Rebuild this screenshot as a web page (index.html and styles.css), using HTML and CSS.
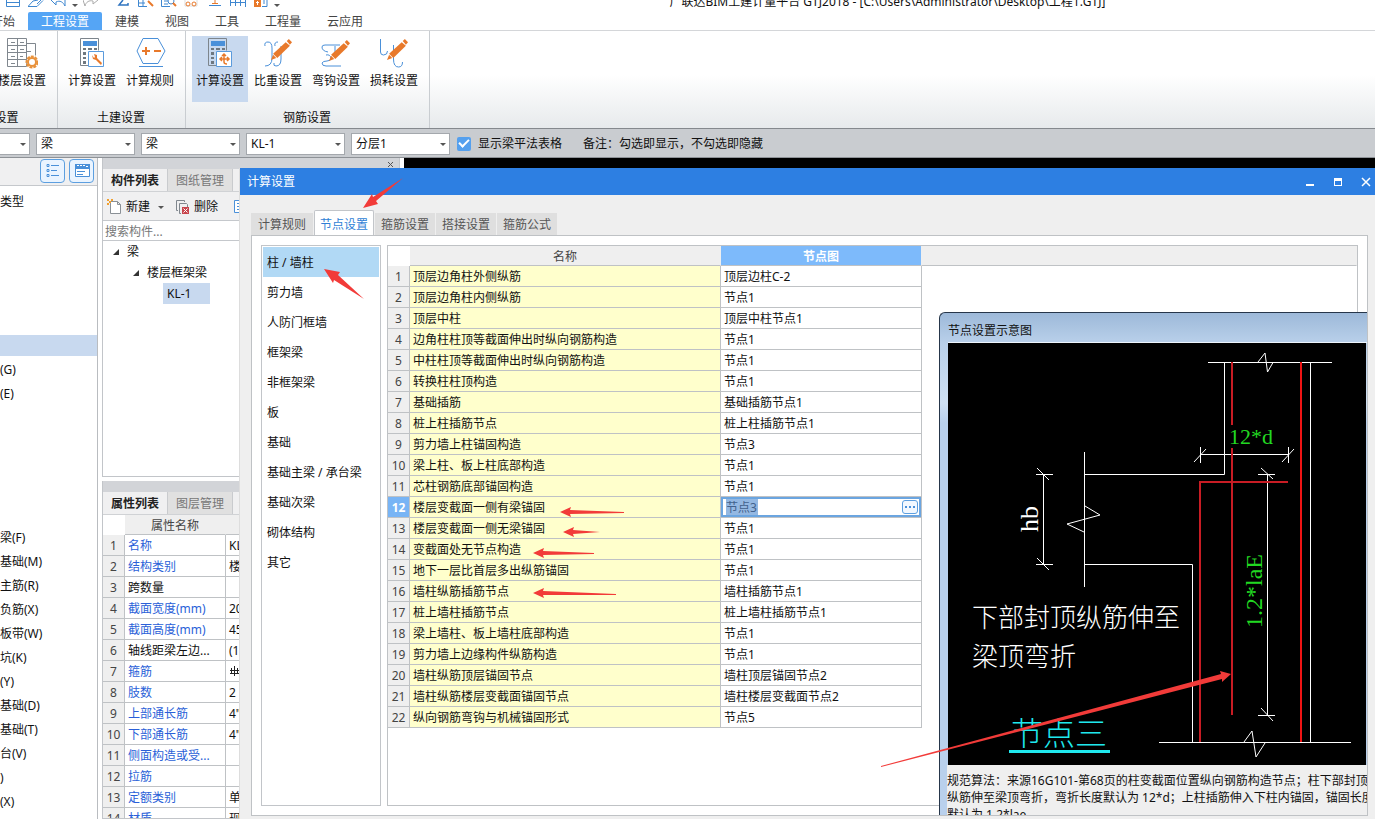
FILE: index.html
```html
<!DOCTYPE html>
<html lang="zh-CN">
<head>
<meta charset="utf-8">
<title>广联达BIM土建计量平台 GTJ2018</title>
<link rel="stylesheet" href="styles.css">
</head>
<body>
<svg class="defs" aria-hidden="true">
  <symbol id="calc" viewBox="0 0 32 32">
    <path d="M4.5 1.5h18v12M12 28.500H4.500V1.500" fill="none" stroke="#7d858c"/>
    <path d="M7 4h14v5H7z" fill="#4a90d9"/>
    <path d="M7 11h3v2H7zm5 0h4v2h-4zm6 0h3v2h-3zM7 15h3v3H7zm0 5h3v2H7zm0 4h3v3H7zm5-9h1v3h-1z" fill="#6f7880"/>
    <path d="M12.500 14.500h15v15h-15z" fill="#fff" stroke="#5b9bdc"/>
  </symbol>
  <symbol id="pencil" viewBox="0 0 20 20">
    <path d="M0 20l2-5 3 3z" fill="#e8792b"/>
    <path d="M2 14L14 3l4 3.500L6 18z" fill="#e8792b"/>
    <path d="M15 2l2-2 3 3-2 2.500z" fill="#e8792b"/>
  </symbol>
</svg>

<header class="titlebar">
  <div class="quick">
    <button aria-label="保存"><svg viewBox="0 0 16 7"><path d="M1.500 0v6.500h13V0M2 2.500h12" fill="none" stroke="#3f87d0"/></svg></button>
    <button aria-label="打开"><svg viewBox="0 0 16 7"><path d="M0 6.500h9l6-6M0 6.500L5 1l5-1M9 4l4-4" fill="none" stroke="#3f87d0"/></svg></button>
    <button class="menu" aria-label="撤销"><svg viewBox="0 0 16 7"><path d="M0 0l5 5V2c4-2 7 0 9 4V0" fill="none" stroke="#3f87d0"/></svg><i class="caret"></i></button>
    <button class="menu dim" aria-label="恢复"><svg viewBox="0 0 16 7"><path d="M15 0l-5 4V1C6 0 3 2 2 6L0 0" fill="none" stroke="#aaa"/></svg><i class="caret"></i></button>
    <button aria-label="汇总"><svg viewBox="0 0 16 7"><path d="M8 0L4 5h9V3" fill="none" stroke="#2f74c0" stroke-width="1.500"/></svg></button>
    <button aria-label="查看"><svg viewBox="0 0 16 7"><path d="M.5 0v6.500H9M5 0v6M1 3h6" fill="none" stroke="#3f87d0"/><path d="M10 1l5 5" stroke="#e8792b" stroke-width="2"/></svg></button>
    <button aria-label="查找"><svg viewBox="0 0 16 7"><path d="M.5 0v6.500H9M3 1h4M3 4h4" fill="none" stroke="#3f87d0"/><circle cx="10" cy="1" r="3" fill="none" stroke="#3f87d0"/><path d="M12 3l3 3" stroke="#e8792b" stroke-width="2"/></svg></button>
    <button aria-label="检查"><svg viewBox="0 0 16 7"><path d="M1 0v6h12V0" fill="none" stroke="#ddd"/><circle cx="4" cy="4" r="2" fill="none" stroke="#e8792b"/><circle cx="10" cy="4" r="2" fill="none" stroke="#e8792b"/></svg></button>
    <button aria-label="钢筋"><svg viewBox="0 0 16 7"><path d="M8 0v3M5 3.500h6" fill="none" stroke="#e8792b"/><path d="M2 5.500h12" stroke="#3f87d0"/></svg></button>
    <button aria-label="表格"><svg viewBox="0 0 16 7"><path d="M.5 6V0M5.500 6V0M10.500 6V0M15.500 7V0M0 2.500h16" fill="none" stroke="#3f87d0"/></svg></button>
    <button class="menu" aria-label="更多"><svg viewBox="0 0 16 7"><path d="M1 0h7v7H1z" fill="#e8792b"/><path d="M4 1h1v1h1v1H5v2H4V3H3V2h1z" fill="#fff"/><path d="M9 6.500h5V0M11 0v4" fill="none" stroke="#3f87d0"/></svg><i class="caret"></i></button>
  </div>
  <h1 class="app-title">广联达BIM土建计量平台 GTJ2018 - [C:\Users\Administrator\Desktop\工程1.GTJ]</h1>
</header>

<nav class="menubar">
  <button>开始</button><button class="on">工程设置</button><button>建模</button><button>视图</button><button>工具</button><button>工程量</button><button>云应用</button>
</nav>

<section class="ribbon">
  <div class="group cut">
    <div class="tools">
      <button class="tool"><svg viewBox="0 0 32 32"><path d="M1.500 1.500h19v28h-19zM1.500 8.500h19M1.500 15.500h19M1.500 22.500h19M11.500 1.500v28M21 6.500h8.500v12M21 14.500h4" fill="none" stroke="#80878e"/><path d="M5 5.500h4M14 5.500h4M5 12.500h4M14 12.500h4M5 19.500h4M5 26.500h4M14 19.500h3" stroke="#80878e"/><circle cx="26" cy="25" r="5.500" fill="#fff" stroke="#e8913a" stroke-width="2" stroke-dasharray="3 1"/><circle cx="26" cy="25" r="4" fill="#fff" stroke="#e8913a" stroke-width="2"/></svg><span>楼层设置</span></button>
    </div>
    <div class="caption">工程设置</div>
  </div>
  <div class="group">
    <div class="tools">
      <button class="tool"><svg viewBox="0 0 32 32"><use href="#calc"/><path d="M16 18l1 4 3 1 5 5 1-2-5-5v-3l-3-1 1 3-1 1z" fill="#e8792b"/></svg><span>计算设置</span></button>
      <button class="tool"><svg viewBox="0 0 32 32"><path d="M3 14L9 1.500h15L31 14l-7 12.500H9zM5 29.500h24" fill="none" stroke="#4a90d9"/><path d="M8 14h8M12 10v8M20 14h7" stroke="#e8792b" stroke-width="2"/></svg><span>计算规则</span></button>
    </div>
    <div class="caption">土建设置</div>
  </div>
  <div class="group">
    <div class="tools">
      <button class="tool on"><svg viewBox="0 0 32 32"><use href="#calc"/><path d="M16 22h9M20 17v8q0 2 3 2M18 19l2-2 2 2M23 20l2 2-2 2M18 20l-2 2 2 2" fill="none" stroke="#e8792b" stroke-width="1.500"/></svg><span>计算设置</span></button>
      <button class="tool"><svg viewBox="0 0 32 32"><path d="M3 9Q2 5 6 5q4 0 4 6v10q0 8-7 8M13 9q-1-4 3-4M19 9v13q0 7-5 7-3 0-2-3" fill="none" stroke="#4a90d9"/><use href="#pencil" x="9" y="2" width="21" height="21"/></svg><span>比重设置</span></button>
      <button class="tool"><svg viewBox="0 0 32 32"><path d="M8 15q-6-1-6-5 0-2 3-2h15M15 9v7M6 18q4-1 5 3 0 3-4 3-4 0-5 2 0 3 4 3h15" fill="none" stroke="#4a90d9"/><use href="#pencil" x="9" y="3" width="21" height="21"/></svg><span>弯钩设置</span></button>
      <button class="tool"><svg viewBox="0 0 32 32"><path d="M2.500 2v13q0 3 3 3 4 0 4-4M15.500 8v14q0 8 5 8 4 0 4-5" fill="none" stroke="#4a90d9"/><use href="#pencil" x="9" y="2" width="21" height="21"/></svg><span>损耗设置</span></button>
    </div>
    <div class="caption">钢筋设置</div>
  </div>
</section>

<section class="filters">
  <label class="combo cut"><select aria-label="楼层"><option></option></select></label>
  <label class="combo"><select aria-label="构件类别"><option>梁</option></select></label>
  <label class="combo"><select aria-label="构件类型"><option>梁</option></select></label>
  <label class="combo"><select aria-label="构件"><option>KL-1</option></select></label>
  <label class="combo"><select aria-label="分层"><option>分层1</option></select></label>
  <label class="check"><input type="checkbox" checked>显示梁平法表格</label>
  <span class="remark">备注：勾选即显示，不勾选即隐藏</span>
</section>

<main class="work">
  <aside class="nav">
    <div class="nav-head">
      <button aria-label="列表"><svg viewBox="0 0 18 18"><path d="M3 2.500h2v2H3zM3 7.500h2v2H3zM3 12.500h2v2H3zM7 3.500h8M7 8.500h6M7 13.500h8" fill="none" stroke="#4a90d9"/></svg></button>
      <button aria-label="窗口"><svg viewBox="0 0 18 18"><path d="M2.500 2.500h14v12h-14z" fill="#fff" stroke="#4a90d9"/><path d="M2 2h15v5H2z" fill="#4a90d9"/><path d="M4 3.500h2M7 3.500h2M10 3.500h2M13 4.500h2" stroke="#fff"/><path d="M4 9.500h8M4 12.500h6" stroke="#4a90d9"/></svg></button>
    </div>
    <ul class="nav-list">
      <li>类型</li><li></li><li></li><li></li><li></li><li></li><li class="on"></li><li>(G)</li><li>(E)</li><li></li><li></li><li></li><li></li><li></li>
      <li>梁(F)</li><li>基础(M)</li><li>主筋(R)</li><li>负筋(X)</li><li>板带(W)</li><li>坑(K)</li><li>(Y)</li><li>基础(D)</li><li>基础(T)</li><li>台(V)</li><li>)</li><li>(X)</li>
    </ul>
  </aside>

  <div class="dock">
    <section class="pane parts">
      <div class="strip"><button aria-label="关闭面板"><svg viewBox="0 0 8 8"><path d="M1 1l5 5M6 1L1 6" stroke="#555"/></svg></button></div>
      <div class="pane-tabs"><button class="on">构件列表</button><button>图纸管理</button></div>
      <div class="pane-tools">
        <button><svg viewBox="0 0 16 16"><path d="M3.500 2.500h7l3 3v9h-10zM10.500 2.500v3h3" fill="#fff" stroke="#8a9096"/><path d="M0 0h2v2h2V0h2v2H4v2H2v2H0V4h2V2H0z" fill="#f0a030"/></svg>新建<i class="caret"></i></button>
        <button><svg viewBox="0 0 16 16"><path d="M3 11.500H1.500v-10h8V3M6 14.500H4.500v-10h7l1 1V8" fill="none" stroke="#80878e"/><path d="M7 8h7v7H7z" fill="#c8454d"/><path d="M8.500 9.500l4 4M12.500 9.500l-4 4" stroke="#fff"/></svg>删除</button>
        <button class="copy" aria-label="复制"><svg viewBox="0 0 16 16"><path d="M1.500 1.500h9v12h-9zM4 4.500h5M4 7.500h5M4 10.500h5" fill="#fff" stroke="#4a90d9"/></svg></button>
      </div>
      <input class="search" placeholder="搜索构件..." aria-label="搜索构件">
      <ul class="tree">
        <li><i class="twig"></i>梁</li>
        <li class="l2"><i class="twig"></i>楼层框架梁</li>
        <li class="l3"><span>KL-1</span></li>
      </ul>
    </section>
    <section class="pane props">
      <div class="strip"></div>
      <div class="pane-tabs"><button class="on">属性列表</button><button>图层管理</button></div>
      <table class="grid prop-grid">
        <colgroup><col class="c-no"><col class="c-prop"><col></colgroup>
        <thead><tr><th class="corner"></th><th>属性名称</th><th></th></tr></thead>
        <tbody>
          <tr><th>1</th><td class="key">名称</td><td>KL</td></tr>
          <tr><th>2</th><td class="key">结构类别</td><td>楼</td></tr>
          <tr><th>3</th><td>跨数量</td><td></td></tr>
          <tr><th>4</th><td class="key">截面宽度(mm)</td><td>200</td></tr>
          <tr><th>5</th><td class="key">截面高度(mm)</td><td>450</td></tr>
          <tr><th>6</th><td>轴线距梁左边...</td><td>(1</td></tr>
          <tr><th>7</th><td class="key">箍筋</td><td><svg class="rebar" viewBox="0 0 10 12"><path d="M2.500 2v5M5.500 0v10M8.500 2v5M1 4.500h9M1 7.500h9" stroke="#222"/></svg></td></tr>
          <tr><th>8</th><td class="key">肢数</td><td>2</td></tr>
          <tr><th>9</th><td class="key">上部通长筋</td><td>4"</td></tr>
          <tr><th>10</th><td class="key">下部通长筋</td><td>4"</td></tr>
          <tr><th>11</th><td class="key">侧面构造或受...</td><td></td></tr>
          <tr><th>12</th><td class="key">拉筋</td><td></td></tr>
          <tr><th>13</th><td class="key">定额类别</td><td>单</td></tr>
          <tr><th>14</th><td class="key">材质</td><td>现</td></tr>
        </tbody>
      </table>
    </section>
  </div>
  <div class="canvas"></div>

  <section class="dialog" role="dialog" aria-label="计算设置">
    <header class="dialog-bar">
      <h2>计算设置</h2>
      <button aria-label="最小化"><svg viewBox="0 0 10 10"><path d="M1 7h8v2H1z" fill="#fff"/></svg></button>
      <button aria-label="最大化"><svg viewBox="0 0 10 10"><path d="M1 1h8v8H1zM2 4v4h6V4z" fill="#fff" fill-rule="evenodd"/></svg></button>
      <button aria-label="关闭"><svg viewBox="0 0 10 10"><path d="M1 1l8 8M9 1L1 9" stroke="#fff" stroke-width="1.500"/></svg></button>
    </header>
    <div class="dialog-tabs"><button>计算规则</button><button class="on">节点设置</button><button>箍筋设置</button><button>搭接设置</button><button>箍筋公式</button></div>
    <div class="page">
      <ul class="kinds">
        <li class="on">柱 / 墙柱</li><li>剪力墙</li><li>人防门框墙</li><li>框架梁</li><li>非框架梁</li><li>板</li><li>基础</li><li>基础主梁 / 承台梁</li><li>基础次梁</li><li>砌体结构</li><li>其它</li>
      </ul>
      <div class="sheet">
        <table class="grid node-grid">
          <colgroup><col class="c-no"><col class="c-name"><col class="c-node"><col></colgroup>
          <thead><tr><th class="corner"></th><th>名称</th><th class="on">节点图</th><th></th></tr></thead>
          <tbody>
            <tr><th>1</th><td>顶层边角柱外侧纵筋</td><td>顶层边柱C-2</td></tr>
            <tr><th>2</th><td>顶层边角柱内侧纵筋</td><td>节点1</td></tr>
            <tr><th>3</th><td>顶层中柱</td><td>顶层中柱节点1</td></tr>
            <tr><th>4</th><td>边角柱柱顶等截面伸出时纵向钢筋构造</td><td>节点1</td></tr>
            <tr><th>5</th><td>中柱柱顶等截面伸出时纵向钢筋构造</td><td>节点1</td></tr>
            <tr><th>6</th><td>转换柱柱顶构造</td><td>节点1</td></tr>
            <tr><th>7</th><td>基础插筋</td><td>基础插筋节点1</td></tr>
            <tr><th>8</th><td>桩上柱插筋节点</td><td>桩上柱插筋节点1</td></tr>
            <tr><th>9</th><td>剪力墙上柱锚固构造</td><td>节点3</td></tr>
            <tr><th>10</th><td>梁上柱、板上柱底部构造</td><td>节点1</td></tr>
            <tr><th>11</th><td>芯柱钢筋底部锚固构造</td><td>节点1</td></tr>
            <tr><th class="on">12</th><td>楼层变截面一侧有梁锚固</td><td class="editing"><div class="editor"><input value="节点3" aria-label="节点图"><button aria-label="选择节点"><svg viewBox="0 0 14 12"><path d="M2 5h2v2H2zm4 0h2v2H6zm4 0h2v2h-2z" fill="#4a90d9"/></svg></button></div></td></tr>
            <tr><th>13</th><td>楼层变截面一侧无梁锚固</td><td>节点1</td></tr>
            <tr><th>14</th><td>变截面处无节点构造</td><td>节点1</td></tr>
            <tr><th>15</th><td>地下一层比首层多出纵筋锚固</td><td>节点1</td></tr>
            <tr><th>16</th><td>墙柱纵筋插筋节点</td><td>墙柱插筋节点1</td></tr>
            <tr><th>17</th><td>桩上墙柱插筋节点</td><td>桩上墙柱插筋节点1</td></tr>
            <tr><th>18</th><td>梁上墙柱、板上墙柱底部构造</td><td>节点1</td></tr>
            <tr><th>19</th><td>剪力墙上边缘构件纵筋构造</td><td>节点1</td></tr>
            <tr><th>20</th><td>墙柱纵筋顶层锚固节点</td><td>墙柱顶层锚固节点2</td></tr>
            <tr><th>21</th><td>墙柱纵筋楼层变截面锚固节点</td><td>墙柱楼层变截面节点2</td></tr>
            <tr><th>22</th><td>纵向钢筋弯钩与机械锚固形式</td><td>节点5</td></tr>
          </tbody>
        </table>
      </div>

      <section class="preview" aria-label="节点设置示意图">
        <h3>节点设置示意图</h3>
        <svg class="drawing" viewBox="948 343 418 422">
          <path class="w" d="M1208 362.500h124M1224.500 362v112.500H1085M1310.500 362v380M1258 362l7-9 2.500 19 5.500-9.500M1200 454.500h88M1200.500 447v16M1288.500 447v16M1194 462l12-13M1282 462l12-13M1084.500 452v135M1085 506l15 9-33 9 17 8M1043.500 474v91M1036 474.500h17M1037 468l12 12M1036 564.500h17M1037 558l12 12M1085 564.500h107.500V742M1267.500 474v241M1258 474.500h17M1261 468l12 11M1258 715.500h17M1261 708l12 13M1159 742.500h192M1244 742l8-11 4 26 9-14"/>
          <path class="r" d="M1232 362v63M1232 448v267M1288 482h-88v260"/>
          <path class="r2" d="M1301 362v380"/>
          <text class="dim" x="1229" y="444">12*d</text>
          <text class="dim tall" transform="translate(1262 628) rotate(-90)">1.2*laE</text>
          <text class="hb" transform="translate(1038 532) rotate(-90)">hb</text>
          <text class="note" x="972" y="627">下部封顶纵筋伸至</text>
          <text class="note" x="972" y="666">梁顶弯折</text>
          <text class="name" x="1011" y="745">节点三</text>
          <path class="under" d="M1009 751.500h101"/>
        </svg>
        <p>规范算法：来源16G101-第68页的柱变截面位置纵向钢筋构造节点；柱下部封顶<br>纵筋伸至梁顶弯折，弯折长度默认为 12*d；上柱插筋伸入下柱内锚固，锚固长度<br>默认为 1.2*lae</p>
      </section>
    </div>
  </section>
</main>

<svg class="marks" aria-hidden="true">
  <g fill="#f23b39">
    <path d="M363 208L372 194 373 197 403 178 376 201 378 204z"/>
    <path d="M324 269L340 272 338 275 364 299 334 280 333 283z"/>
    <path d="M560 512L571 507 570 510 624 512 624 513 570 514 571 517z"/>
    <path d="M563 532L574 527 573 530 600 532 573 534 574 537z"/>
    <path d="M533 553L544 548 543 551 594 553 594 554 543 555 544 558z"/>
    <path d="M533 593L544 588 543 591 616 594 616 595 543 595 544 598z"/>
    <path d="M1231 674L1220 671 1221 674 881 766 881 767 1222 679 1222 682z"/>
  </g>
</svg>
</body>
</html>
```
FILE: styles.css
```css
* { box-sizing: border-box; }
body {
  margin: 0;
  height: 100vh;
  overflow: hidden;
  display: flex;
  flex-direction: column;
  background: #fff;
  color: #111;
  font: 12px/18px "Noto Sans", "Noto Sans CJK SC", sans-serif;
}
button, input, select { font: inherit; color: inherit; }
button { border: 0; padding: 0; background: none; white-space: nowrap; }
ul { list-style: none; margin: 0; padding: 0; }
h1, h2, h3, p { margin: 0; font: inherit; }
svg { display: block; flex: none; }
.defs { display: none; }
.caret { flex: none; border: 3px solid transparent; border-top-color: #555; border-bottom: 0; }

/* Title bar */
.titlebar { display: flex; height: 12px; overflow: hidden; flex: none; }
.quick { width: 400px; flex: none; display: flex; gap: 7px; padding-left: 5px; }
.quick button { display: flex; align-items: flex-start; gap: 5px; }
.quick svg { width: 16px; height: 7px; }
.quick .caret { margin-top: 4px; }
.quick .menu { margin-right: -2px; }
.quick .dim .caret { visibility: hidden; }
.app-title { flex: 1; margin-top: -7px; text-align: center; white-space: nowrap; }

/* Menu tabs */
.menubar { display: flex; flex: none; height: 19px; border-bottom: 1px solid #d4d6d9; margin-left: -22px; }
.menubar button { padding: 2px 13px 0; line-height: 16px; color: #444; border-radius: 2px 2px 0 0; }
.menubar .on { background: #55a5f5; color: #fff; }

/* Ribbon */
.ribbon { display: flex; flex: none; height: 98px; border-bottom: 1px solid #85898e; background: linear-gradient(#fff 45%, #e7eaec); }
.group { flex: none; display: flex; flex-direction: column; justify-content: space-between; padding: 5px 7px 1px 6px; border-right: 1px solid #c9cdd1; }
.group.cut { width: 125px; margin-left: -67px; }
.group.cut .tools { justify-content: flex-end; }
.tools { display: flex; gap: 2px; }
.tool { width: 56px; height: 66px; display: flex; flex-direction: column; align-items: center; gap: 3px; padding-top: 1px; }
.tool svg { width: 32px; height: 32px; }
.tool.on { background: #c8d9ef; }
.caption { text-align: center; }

/* Filter row */
.filters { display: flex; flex: none; align-items: center; gap: 6px; height: 29px; padding-top: 1px; background: #c9ccd0; border-bottom: 1px solid #8e9297; }
.combo { position: relative; width: 99px; flex: none; display: flex; }
.combo.cut { margin-left: -69px; }
.combo select { appearance: none; width: 100%; height: 22px; padding: 0 4px; border: 1px solid #a4a8ad; border-radius: 0; background: #fff; line-height: 18px; }
.combo::after { content: ""; position: absolute; right: 4px; top: 10px; border: 3px solid transparent; border-top-color: #555; border-bottom: 0; }
.check { display: flex; align-items: center; gap: 7px; margin-left: 1px; }
.check input { appearance: none; width: 14px; height: 14px; margin: 0; border-radius: 2px; background: #55a0ee; display: grid; place-items: center; }
.check input::before { content: ""; width: 8px; height: 4px; border: solid #fff; border-width: 0 0 2px 2px; rotate: -45deg; margin-bottom: 3px; }
.remark { margin-left: 15px; }

/* Work area */
.work { position: relative; flex: 1; min-height: 0; display: flex; }
.nav { width: 98px; flex: none; border-right: 1px solid #b9bcc0; overflow: hidden; }
.nav-head { height: 28px; display: flex; justify-content: flex-end; gap: 4px; padding: 1px 3px; background: #f0f0f1; border-bottom: 1px solid #c5c8cc; }
.nav-head button { width: 25px; height: 24px; display: grid; place-items: center; border: 1px solid #5c9fe0; border-radius: 4px; background: #eaf4ff; }
.nav-head svg { width: 18px; height: 18px; }
.nav-list { padding-top: 4px; }
.nav-list li { height: 24px; line-height: 24px; border: solid #fff; border-width: 0; white-space: nowrap; }
.nav-list .on { background: #c8d9ef; border-width: 1px 0 2px; }

.dock { width: 298px; flex: none; display: flex; flex-direction: column; gap: 4px; margin-left: 4px; }
.pane { display: flex; flex-direction: column; border: 1px solid #c2c5c9; border-top: 0; }
.parts { height: 319px; flex: none; }
.props { flex: 1; min-height: 0; overflow: hidden; }
.strip { height: 11px; flex: none; display: flex; justify-content: flex-end; background: #d2d4d8; padding: 3px 4px 0 0; }
.strip svg { width: 8px; height: 8px; }
.pane-tabs { display: flex; height: 23px; flex: none; background: #f0f0f1; border-bottom: 1px solid #d0d2d5; }
.pane-tabs button { width: 65px; padding-top: 2px; border-right: 1px solid #c9cbce; background: #e0e0e0; color: #777; }
.pane-tabs .on { background: #f0f0f1; color: #222; font-weight: bold; }
.pane-tools { display: flex; height: 29px; flex: none; align-items: center; gap: 11px; padding: 2px 0 0 4px; background: #f0f0f1; border-bottom: 1px solid #c5c8cc; }
.pane-tools button { display: flex; align-items: center; gap: 3px; }
.pane-tools svg { width: 16px; height: 16px; }
.pane-tools .caret { margin-left: 5px; }
.pane-tools .copy { margin-left: 4px; }
.search { height: 20px; flex: none; border: 0; border-bottom: 1px solid #c5c8cc; padding: 2px 2px 0; outline: 0; border-radius: 0; }
.search::placeholder { color: #777; }
.tree li { height: 21px; display: flex; align-items: center; padding-left: 10px; gap: 8px; }
.tree .l2 { padding-left: 30px; }
.tree .l3 { padding-left: 60px; }
.tree .l3 span { width: 47px; padding: 0 4px; line-height: 21px; background: #c8d9ef; }
.twig { border: 3px solid #333; border-left-color: transparent; border-top-color: transparent; }
.canvas { flex: 1; background: #000; margin-left: 4px; }

/* Grids */
.grid { width: 100%; table-layout: fixed; border-collapse: separate; border-spacing: 0; }
.grid th, .grid td { height: 21px; padding: 2px 3px 0; line-height: 18px; border: solid #bfc2c5; border-width: 0 1px 1px 0; white-space: nowrap; overflow: hidden; text-align: left; }
.grid th { padding: 2px 0 0; background: #efefef; color: #444; font-weight: normal; text-align: center; }
.grid thead th { height: 20px; line-height: 17px; border-right-color: #efefef; }
.grid .corner { background: #fff; border-color: #fff; }
.c-no { width: 22px; }
.c-prop { width: 101px; }
.c-name { width: 311px; }
.c-node { width: 201px; }
.prop-grid .key { color: #2a5fd8; }
.rebar { width: 10px; height: 12px; }
.node-grid td:nth-child(2) { background: #ffffcc; }
.node-grid thead .on { background: #7dbafb; color: #fff; font-weight: bold; }
.node-grid tbody .on { background: #78b4f5; color: #fff; font-weight: bold; }
.grid .editing { padding: 0; }
.editor { height: 20px; display: flex; align-items: center; justify-content: space-between; padding: 0 1px 0 3px; border: 2px solid #6ba5e0; }
.editor input { width: 32px; height: 16px; padding: 1px 0 0; border: 0; background: #94b8e2; color: #42618c; }
.editor button { width: 16px; height: 14px; border: 1px solid #5c9fe0; border-radius: 3px; background: #f2f8ff; }
.editor svg { width: 14px; height: 12px; }

/* Calculation settings dialog */
.dialog { position: absolute; left: 239px; top: 10px; right: 0; bottom: 0; display: flex; flex-direction: column; padding-bottom: 3px; background: #efefef; border-left: 1px solid #ddd; }
.dialog-bar { height: 27px; flex: none; display: flex; align-items: center; gap: 18px; padding: 0 4px 0 7px; background: #2d7fe2; color: #fff; }
.dialog-bar h2 { flex: 1; }
.dialog-bar svg { width: 10px; height: 10px; }
.dialog-tabs { height: 40px; flex: none; display: flex; align-items: flex-end; gap: 1px; padding-left: 11px; }
.dialog-tabs button { width: 60px; height: 22px; padding-top: 2px; background: #dfdfdf; color: #555; }
.dialog-tabs button:first-child { width: 62px; }
.dialog-tabs .on { height: 26px; position: relative; bottom: -1px; border: 1px solid #c2c5c9; border-bottom: 0; border-radius: 2px 2px 0 0; background: #fff; color: #2f7fd6; }
.page { position: relative; flex: 1; min-height: 0; display: flex; gap: 6px; margin: 0 7px 0 11px; padding: 9px; border: 1px solid #bfc2c5; background: #fff; overflow: hidden; }
.kinds { width: 120px; flex: none; padding: 1px; border: 1px solid #c2c5c9; }
.kinds li { height: 30px; line-height: 32px; padding-left: 4px; white-space: nowrap; }
.kinds .on { background: #b1d9f5; }
.sheet { flex: 1; min-width: 0; border: 1px solid #bfc2c5; }

/* Node preview window */
.preview { position: absolute; left: 687px; top: 76px; right: 0; bottom: 0; padding-left: 8px; border: solid #26364a; border-width: 1px 0 0 1px; border-radius: 6px 0 0 0; background: linear-gradient(#9db9d9, #b9d0ea 30px, #cfe0f3 90px, #b9d0ec 110px); overflow: hidden; }
.preview h3 { height: 30px; line-height: 36px; border-bottom: 1px solid #eef5fc; }
.drawing { width: 418px; height: 422px; background: #000; }
.drawing path { fill: none; }
.drawing .w { stroke: #fff; }
.drawing .r { stroke: #c81c24; stroke-width: 2; }
.drawing .r2 { stroke: #f01414; stroke-width: 2; }
.dim { font: 22px "Liberation Serif", serif; fill: #22d822; }
.dim.tall { font-size: 24px; }
.hb { font: 26px "Liberation Serif", serif; fill: #fff; }
.note { font: 300 26px "Noto Sans CJK SC", sans-serif; fill: #fff; }
.name { font: 300 32px "Noto Sans CJK SC", sans-serif; fill: #1fe8ee; }
.drawing .under { stroke: #1fe8ee; stroke-width: 3; }
.preview p { height: 60px; padding-top: 7px; margin-left: -1px; line-height: 17px; white-space: nowrap; background: #efefef; }

/* Annotation arrows */
.marks { position: absolute; left: 0; top: 0; width: 100%; height: 100%; pointer-events: none; }
```
